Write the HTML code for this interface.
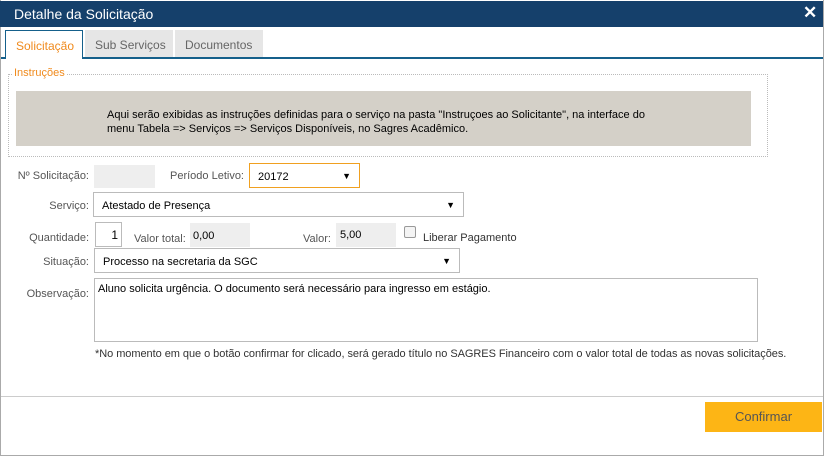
<!DOCTYPE html>
<html><head><meta charset="utf-8"><style>
*{box-sizing:border-box;margin:0;padding:0}
body{width:827px;height:460px;background:#fff;font-family:"Liberation Sans",sans-serif;font-size:11px;color:#333;position:relative;overflow:hidden}
.a{position:absolute}
.lbl{position:absolute;text-align:right;color:#555;white-space:nowrap}
.box{position:absolute;border:1px solid #bbb;background:#fff}
.gray{position:absolute;background:#eee}
.arr{position:absolute;right:8px;top:50%;transform:translateY(-50%);font-size:9px;color:#000}
</style></head><body>
<div class="a" style="left:0;top:0;width:824px;height:456px;border:1px solid #aaa;border-top:none"></div>
<div class="a" style="left:0;top:1px;width:823px;height:26px;background:#15406b;color:#fff;font-size:14px;padding:5px 0 0 14px">Detalhe da Solicitação</div>
<div class="a" style="left:803px;top:3px;color:#fff;font-size:17px;font-weight:bold">✕</div>
<div class="a" style="left:1px;top:57px;width:822px;height:2px;background:#15608b"></div>
<div class="a" style="left:5px;top:30px;width:78px;height:29px;background:#fff;border:1px solid #15608b;border-bottom:none;color:#f08a1c;font-size:12px;padding:8px 0 0 10px">Solicitação</div>
<div class="a" style="left:85px;top:30px;width:88px;height:27px;background:#e6e6e6;color:#666;font-size:12px;padding:8px 0 0 10px">Sub Serviços</div>
<div class="a" style="left:175px;top:30px;width:88px;height:27px;background:#e6e6e6;color:#666;font-size:12px;padding:8px 0 0 10px">Documentos</div>
<div class="a" style="left:8px;top:74px;width:760px;height:83px;border:1px dotted #bbb"></div>
<div class="a" style="left:12px;top:67px;background:#fff;color:#f08a1c;font-size:11px;padding:0 2px">Instruções</div>
<div class="a" style="left:16px;top:91px;width:735px;height:55px;background:#d4d0c8;color:#000;font-size:11px;line-height:14px;padding:17px 0 0 91px">Aqui serão exibidas as instruções definidas para o serviço na pasta "Instruçoes ao Solicitante", na interface do<br>menu Tabela =&gt; Serviços =&gt; Serviços Disponíveis, no Sagres Acadêmico.</div>

<div class="lbl" style="right:738px;top:170px">Nº Solicitação:</div>
<div class="gray" style="left:94px;top:165px;width:61px;height:23px"></div>
<div class="lbl" style="right:583px;top:170px">Período Letivo:</div>
<div class="box" style="left:249px;top:163px;width:111px;height:25px;border-color:#f0a020;padding:7px 0 0 8px;color:#000">20172<span class="arr">▼</span></div>

<div class="lbl" style="right:738px;top:200px">Serviço:</div>
<div class="box" style="left:93px;top:192px;width:371px;height:25px;padding:7px 0 0 8px;color:#000">Atestado de Presença<span class="arr">▼</span></div>

<div class="lbl" style="right:738px;top:232px">Quantidade:</div>
<div class="box" style="left:95px;top:222px;width:27px;height:25px;text-align:right;padding:5px 3px 0 0;font-size:12px;color:#000">1</div>
<div class="lbl" style="left:134px;top:233px">Valor total:</div>
<div class="gray" style="left:190px;top:223px;width:60px;height:24px;padding:7px 0 0 3px;color:#000">0,00</div>
<div class="lbl" style="left:303px;top:233px">Valor:</div>
<div class="gray" style="left:336px;top:223px;width:60px;height:24px;padding:6px 0 0 4px;color:#000">5,00</div>
<div class="a" style="left:404px;top:226px;width:12px;height:12px;border:1px solid #999;border-radius:2px;background:#f4f4f4"></div>
<div class="lbl" style="left:423px;top:232px;color:#333">Liberar Pagamento</div>

<div class="lbl" style="right:738px;top:256px">Situação:</div>
<div class="box" style="left:94px;top:248px;width:366px;height:25px;padding:7px 0 0 8px;color:#000">Processo na secretaria da SGC<span class="arr">▼</span></div>

<div class="lbl" style="right:738px;top:288px">Observação:</div>
<div class="box" style="left:94px;top:278px;width:664px;height:64px;padding:4px 0 0 3px;color:#000">Aluno solicita urgência. O documento será necessário para ingresso em estágio.</div>
<div class="lbl" style="left:95px;top:348px;color:#333;letter-spacing:-0.05px">*No momento em que o botão confirmar for clicado, será gerado título no SAGRES Financeiro com o valor total de todas as novas solicitações.</div>

<div class="a" style="left:1px;top:396px;width:822px;height:1px;background:#ccc"></div>
<div class="a" style="left:705px;top:402px;width:117px;height:30px;background:#fdb515;color:#555;font-size:13px;text-align:center;padding-top:7px">Confirmar</div>
</body></html>
